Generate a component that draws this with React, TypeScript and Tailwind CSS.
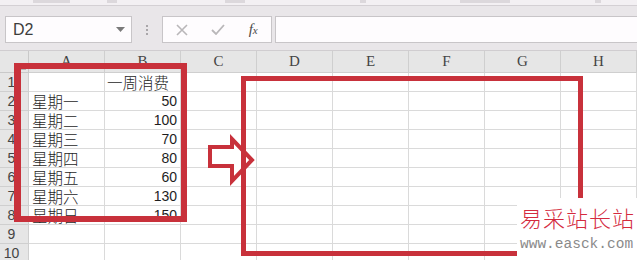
import React from "react";

const cols = ["A", "B", "C", "D", "E", "F", "G", "H"];

const colA = ["", "星期一", "星期二", "星期三", "星期四", "星期五", "星期六", "星期日", "", ""];
const colB = ["一周消费", "50", "100", "70", "80", "60", "130", "150", "", ""];

function NameBox() {
  return (
    <div className="ml-[5px] flex h-[27px] w-[127px] items-center justify-between border border-[#c8c5c8] bg-[#fefcfe] pl-[7px] pr-[6px]">
      <span className="font-['Liberation_Sans',sans-serif] text-[16px] text-[#3c3c3c]">D2</span>
      <svg width="9" height="5" viewBox="0 0 9 5">
        <path d="M0 0 L9 0 L4.5 5 Z" fill="#7a7a7a" />
      </svg>
    </div>
  );
}

function FxBox() {
  return (
    <div className="flex h-[27px] w-[110px] items-center border border-[#c8c5c8] bg-[#fefcfe] pl-[1px]">
      <div className="flex w-[36px] justify-center">
        <svg width="12" height="12" viewBox="0 0 12 12">
          <path d="M1 1 L11 11 M11 1 L1 11" stroke="#b9b7b9" strokeWidth="1.6" />
        </svg>
      </div>
      <div className="flex w-[36px] justify-center">
        <svg width="14" height="11" viewBox="0 0 14 11">
          <path d="M1 6 L5 10 L13 1" stroke="#b9b7b9" strokeWidth="1.8" fill="none" />
        </svg>
      </div>
      <div className="flex w-[36px] justify-center">
        <span className="font-['Liberation_Serif',serif] text-[15px] italic leading-none text-[#4a4a4a]">
          f<span className="text-[11px]">x</span>
        </span>
      </div>
    </div>
  );
}

function Toolbar() {
  return (
    <div>
      <div className="relative h-[6px] border-b border-[#d4d0d4] bg-[#f3f0f3]">
        <div className="absolute left-[33px] top-0 h-[3px] w-[37px] bg-[#dcd8dc]" />
        <div className="absolute left-[107px] top-0 h-[3px] w-[10px] bg-[#dcd8dc]" />
        <div className="absolute left-[225px] top-0 h-[3px] w-[20px] bg-[#dcd8dc]" />
        <div className="absolute left-[360px] top-0 h-[3px] w-[6px] bg-[#dcd8dc]" />
        <div className="absolute left-[460px] top-0 h-[3px] w-[50px] bg-[#dcd8dc]" />
        <div className="absolute left-[595px] top-0 h-[3px] w-[6px] bg-[#dcd8dc]" />
      </div>
      <div className="flex h-[44px] items-start bg-[#e9e6e9] pt-[10px]">
        <NameBox />
        <div className="flex h-[27px] w-[30px] flex-col items-center justify-center gap-[2px]">
          <span className="h-[2px] w-[2px] bg-[#a9a6a9]" />
          <span className="h-[2px] w-[2px] bg-[#a9a6a9]" />
          <span className="h-[2px] w-[2px] bg-[#a9a6a9]" />
        </div>
        <FxBox />
        <div className="ml-[3px] h-[27px] flex-1 border-y border-l border-[#c8c5c8] bg-[#fefcfe]" />
      </div>
    </div>
  );
}

const cjkCell =
  "flex items-end border-b border-r border-[#dadada] pb-[1px] font-['Noto_Sans_CJK_SC',sans-serif] text-[15.5px] font-light leading-[16px] text-[#1e1e1e]";

function Sheet() {
  return (
    <div className="grid grid-cols-[29px_repeat(8,76px)] grid-rows-[22px_repeat(10,19px)] border-t border-[#d0cdd0]">
      <div className="relative border-b border-r border-[#c9c9c9] bg-[#e6e6e6]">
        <svg className="absolute bottom-[2px] right-[2px]" width="7" height="7" viewBox="0 0 7 7">
          <path d="M7 0 L7 7 L0 7 Z" fill="#b4b4b4" />
        </svg>
      </div>
      {cols.map((c) => (
        <div
          key={c}
          className="flex items-center justify-center border-b border-r border-[#cfcfcf] bg-[#e6e6e6] font-['Liberation_Serif',serif] text-[15px] text-[#444]"
        >
          {c}
        </div>
      ))}
      {colA.map((a, i) => (
        <React.Fragment key={i}>
          <div className="flex items-end justify-center border-b border-r border-[#cfcfcf] bg-[#e6e6e6] pr-[5px] font-['Liberation_Sans',sans-serif] text-[14px] leading-[18px] text-[#444]">
            {i + 1}
          </div>
          <div className={cjkCell + " pl-[3px]"}>{a}</div>
          {i === 0 ? (
            <div className={cjkCell + " pl-[2px]"}>{colB[i]}</div>
          ) : (
            <div className="flex items-end justify-end border-b border-r border-[#dadada] pr-[3px] font-['Liberation_Sans',sans-serif] text-[14px] leading-[18px] text-[#1e1e1e]">
              {colB[i]}
            </div>
          )}
          {cols.slice(2).map((c) => (
            <div key={c} className="border-b border-r border-[#dadada]" />
          ))}
        </React.Fragment>
      ))}
    </div>
  );
}

export default function App() {
  return (
    <div className="relative h-[260px] w-[637px] overflow-hidden bg-white">
      <Toolbar />
      <Sheet />

      {/* annotations */}
      <div className="absolute left-[14px] top-[63px] h-[159px] w-[173px] border-[6px] border-l-[7px] border-[#c8313b]" />
      <svg className="absolute left-[205px] top-[134px]" width="52" height="52" viewBox="0 0 52 52">
        <path
          d="M5 13 L27 13 L27 5 L47 26 L27 47 L27 32 L5 32 Z"
          fill="white"
          stroke="#c8313b"
          strokeWidth="4"
        />
      </svg>
      <div className="absolute left-[241px] top-[76px] h-[180px] w-[342px] border-[5px] border-[#c8313b]" />

      {/* watermark */}
      <div className="absolute bottom-0 left-[517px] right-0 top-[198px] flex flex-col items-start bg-white pl-[3px] pt-[6px]">
        <div className="font-['Noto_Sans_CJK_SC',serif] text-[22px] font-light leading-[26px] tracking-[1px] text-[#d42a3e]">
          易采站长站
        </div>
        <div className="mt-[7px] font-['Liberation_Mono',monospace] text-[14.5px] leading-[14px] text-[#8a8a8a]">
          www.easck.com
        </div>
      </div>
    </div>
  );
}
